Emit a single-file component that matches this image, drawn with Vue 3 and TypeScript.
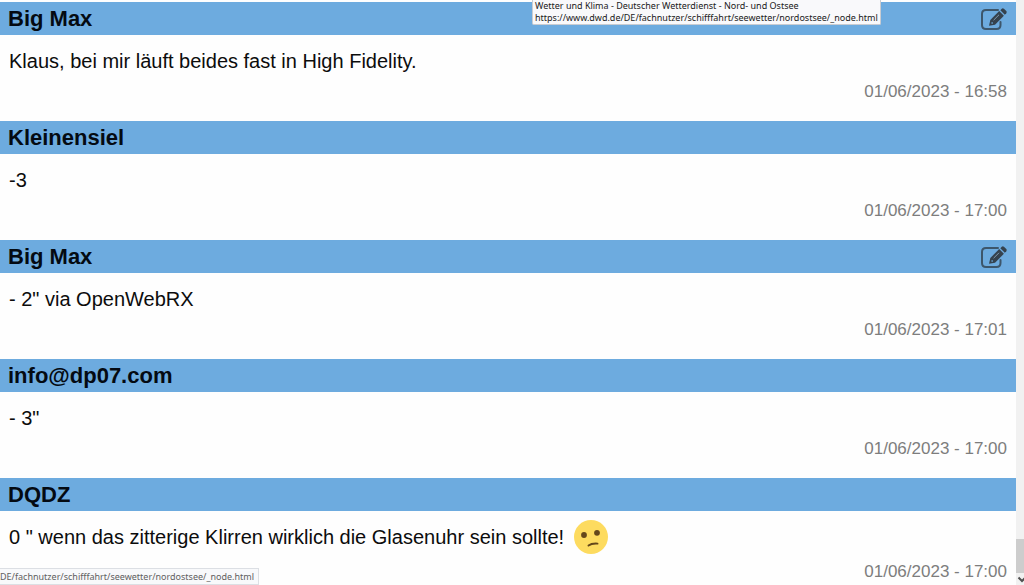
<script setup lang="ts">
interface Message {
  id: number
  author: string
  text: string
  date: string
  editable?: boolean
  confused?: boolean
}

const messages: Message[] = [
  { id: 1, author: 'Big Max', text: 'Klaus, bei mir läuft beides fast in High Fidelity.', date: '01/06/2023 - 16:58', editable: true },
  { id: 2, author: 'Kleinensiel', text: '-3', date: '01/06/2023 - 17:00' },
  { id: 3, author: 'Big Max', text: '- 2" via OpenWebRX', date: '01/06/2023 - 17:01', editable: true },
  { id: 4, author: 'info@dp07.com', text: '- 3"', date: '01/06/2023 - 17:00' },
  { id: 5, author: 'DQDZ', text: '0 " wenn das zitterige Klirren wirklich die Glasenuhr sein sollte!', date: '01/06/2023 - 17:00', confused: true },
]
</script>

<template>
  <div class="page">
    <main class="messages">
      <article v-for="m in messages" :key="m.id" class="message">
        <header class="bar">
          <h2 class="author">{{ m.author }}</h2>
          <button v-if="m.editable" class="edit" type="button" aria-label="Bearbeiten">
            <svg width="28" height="24" viewBox="0 0 28 24" aria-hidden="true">
              <path d="M18 3H6Q2 3 2 7V18Q2 22 6 22H16.5Q20.5 22 20.5 18V15" fill="none" stroke="#3d566b" stroke-width="2" stroke-linecap="round" />
              <path d="M9 18.8L10.3 13L19.2 4.1L23.9 8.8L15 17.7Z" fill="#35424e" />
              <path d="M20.3 3.2L21.8 1.7Q22.8.8 23.9 1.7L26.3 4.1Q27.2 5.2 26.3 6.2L24.8 7.7Z" fill="#35424e" />
              <path d="M13.6 13.2L19 7.8" stroke="#8199ad" stroke-width="1" />
              <path d="M11.6 15.4L12.6 16.4" stroke="#6dabdf" stroke-width="1.4" />
            </svg>
          </button>
        </header>
        <div class="body">
          <p class="text" :class="{ smiley: m.confused }">
            <span>{{ m.text }}</span>
            <svg v-if="m.confused" class="emoji" width="34" height="34" viewBox="0 0 34 34" role="img" aria-label="Verwirrt">
              <circle cx="17" cy="17" r="17" fill="#fddb5f" />
              <circle cx="10" cy="15" r="2.9" fill="#64471b" />
              <circle cx="23" cy="12.8" r="2.9" fill="#64471b" />
              <path d="M14.5 25.6Q17.5 23.2 23.5 23.6" fill="none" stroke="#64471b" stroke-width="1.9" stroke-linecap="round" />
            </svg>
          </p>
          <time class="date">{{ m.date }}</time>
        </div>
      </article>
    </main>
    <div class="scrollbar">
      <div class="thumb"></div>
      <svg class="arrow" width="8" height="12" viewBox="0 0 8 12" aria-hidden="true">
        <path d="M2.5 4.5L6 8L9.5 4.5" fill="none" stroke="#505050" stroke-width="2" />
      </svg>
    </div>
    <div class="tooltip" role="tooltip">
      <div>Wetter und Klima - Deutscher Wetterdienst - Nord- und Ostsee</div>
      <div>https://www.dwd.de/DE/fachnutzer/schifffahrt/seewetter/nordostsee/_node.html</div>
    </div>
    <div class="status">DE/fachnutzer/schifffahrt/seewetter/nordostsee/_node.html</div>
  </div>
</template>

<style>
body {
  margin: 0;
  background: #fefefe;
}
</style>

<style scoped>
.page {
  position: relative;
  display: flex;
  height: 100vh;
  overflow: hidden;
  font-family: "Liberation Sans", Arial, sans-serif;
  color: #0c0c0c;
}
.messages {
  flex: 1;
  min-width: 0;
  padding-top: 2px;
}
.bar {
  display: flex;
  align-items: center;
  justify-content: space-between;
  height: 33px;
  padding: 0 8px;
  background: #6dabdf;
}
.author {
  margin: 0;
  font-size: 22px;
  line-height: 33px;
  font-weight: bold;
  color: #040a12;
}
.edit {
  display: flex;
  padding: 0;
  border: 0;
  background: none;
  cursor: pointer;
}
.body {
  display: flex;
  flex-direction: column;
  padding: 9px 9px 17px;
}
.text {
  display: flex;
  align-items: center;
  gap: 10px;
  margin: 0;
  font-size: 20px;
  line-height: 34px;
}
.text.smiley {
  padding-bottom: 4px;
}
.emoji {
  flex: none;
}
.date {
  align-self: flex-end;
  padding-top: 1px;
  font-size: 17px;
  line-height: 25px;
  color: #7d7d7d;
}
.scrollbar {
  display: flex;
  flex-direction: column;
  justify-content: flex-end;
  width: 8px;
  background: #f1f1f1;
}
.thumb {
  height: 34px;
  background: #cdcdcd;
}
.arrow {
  display: block;
}
.tooltip {
  position: absolute;
  top: 0;
  left: 532px;
  padding: 0 2px;
  border: 1px solid #c9ccd2;
  border-top: 0;
  border-radius: 0 0 2px 2px;
  background: #f9f9fb;
  color: #202020;
  font: 9px/12px "Noto Sans", "Open Sans", sans-serif;
  white-space: nowrap;
}
.status {
  position: absolute;
  left: 0;
  bottom: 0;
  padding: 1px 4px 1px 0;
  border: 1px solid #dcdfe4;
  border-left: 0;
  background: #f8f9fb;
  color: #606060;
  font: 9px/13px "Noto Sans", "Open Sans", sans-serif;
  white-space: nowrap;
}
</style>
